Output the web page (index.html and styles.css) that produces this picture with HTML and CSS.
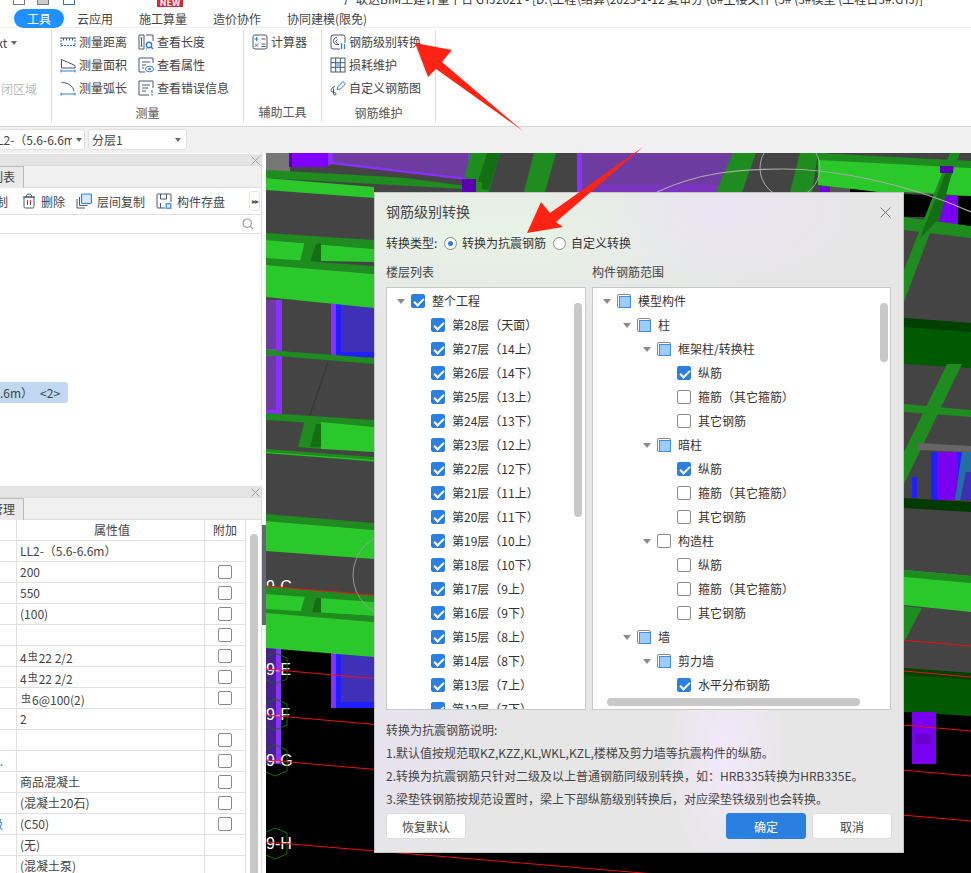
FILE: index.html
```html
<!DOCTYPE html>
<html>
<head>
    <title>钢筋级别转换</title>
    <meta charset="UTF-8">
    <link rel="stylesheet" href="styles.css">
</head>
<body>
<div id="app">
    <div class="title-bar">
        <span class="qa-icon qa-one"></span>
        <span class="qa-icon qa-two"></span>
        <span class="qa-icon qa-three"></span>
        <span class="new-badge">NEW</span>
        <span class="title-text">广联达BIM土建计量平台 GTJ2021 - [D:\工程\结算\2023-1-12 复审分 (8#主楼文件 (5# (3#模型 (工程日3#.GTJ)]</span>
    </div>
    <div class="tab-bar">
        <span class="tab tab-active">工具</span>
        <span class="tab tab-a">云应用</span>
        <span class="tab tab-b">施工算量</span>
        <span class="tab tab-c">造价协作</span>
        <span class="tab tab-d">协同建模(限免)</span>
    </div>

    <div class="ribbon">
        <div class="rib-group rib-first">
            <div class="rib-clip"><div class="rib-xt">xt <i class="caret-small"></i></div><div class="rib-dim">闭区域</div></div>
        </div>
        <div class="rib-group rib-measure">
            <div class="rib-body">
                <div class="rib-col rib-col-a">
                    <div class="rib-item">
                        <svg class="ico" viewBox="0 0 16 16"><path d="M1 4h14M3.500 4v2.500M6.500 4v2.500M9.500 4v2.500M12.500 4v2.500" stroke="#4a5670" fill="none"/><path d="M1 3v10M15 3v10M1 11.500h14" stroke="#2b7fe0" stroke-dasharray="2 1" fill="none"/></svg>
                        <span>测量距离</span>
                    </div>
                    <div class="rib-item">
                        <svg class="ico" viewBox="0 0 16 16"><path d="M1.500 2.500L15 8.500v2.500H1.500z" stroke="#4a5670" fill="none"/><path d="M1 14h14M1 12.500v3M15 12.500v3" stroke="#2b7fe0" fill="none"/></svg>
                        <span>测量面积</span>
                    </div>
                    <div class="rib-item">
                        <svg class="ico" viewBox="0 0 16 16"><path d="M1.500 2.500C8 2.500 13 6 14 11" stroke="#4a5670" fill="none"/><path d="M1 14h14M1 12.500v3M15 12.500v3" stroke="#2b7fe0" fill="none"/></svg>
                        <span>测量弧长</span>
                    </div>
                </div>
                <div class="rib-col">
                    <div class="rib-item">
                        <svg class="ico" viewBox="0 0 16 16"><path d="M8 1h7v6M8 15h1M1 1h5v14H1zM2.500 4h2M3.500 4v8M2.500 12h2" stroke="#4a5670" fill="none"/><circle cx="11" cy="11" r="2.700" stroke="#2b7fe0" stroke-width="1.400" fill="none"/><path d="M13 13l2 2" stroke="#2b7fe0" stroke-width="1.400"/></svg>
                        <span>查看长度</span>
                    </div>
                    <div class="rib-item">
                        <svg class="ico" viewBox="0 0 16 16"><path d="M15 6V1H1v14h6M4 5h8M4 8h4M4 11h2" stroke="#4a5670" fill="none"/><ellipse cx="11.500" cy="12" rx="4" ry="2.800" stroke="#2b7fe0" fill="none"/><circle cx="11.500" cy="12" r="1.300" fill="#2b7fe0"/></svg>
                        <span>查看属性</span>
                    </div>
                    <div class="rib-item">
                        <svg class="ico" viewBox="0 0 16 16"><path d="M15 8V1H1v14h10M4 5h8M4 8h6M4 11h4" stroke="#4a5670" fill="none"/><path d="M14 10v3M14 14v1.500" stroke="#4a5670" fill="none"/></svg>
                        <span>查看错误信息</span>
                    </div>
                </div>
            </div>
            <div class="rib-label">测量</div>
        </div>
        <div class="rib-group rib-aux">
            <div class="rib-body">
                <div class="rib-col">
                    <div class="rib-item">
                        <svg class="ico" viewBox="0 0 16 16"><rect x="1" y="1" width="14" height="14" rx="2" stroke="#4a5670" fill="none"/><path d="M4.500 3v4M2.500 5h4M2.800 9.500l3.400 3.400M6.200 9.500l-3.400 3.400" stroke="#2b7fe0" fill="none"/><path d="M9.500 5h4M9.500 10h4M9.500 12.500h4" stroke="#4a5670" fill="none"/></svg>
                        <span>计算器</span>
                    </div>
                </div>
            </div>
            <div class="rib-label">辅助工具</div>
        </div>
        <div class="rib-group rib-rebar">
            <div class="rib-body">
                <div class="rib-col">
                    <div class="rib-item">
                        <svg class="ico" viewBox="0 0 16 16"><path d="M10 15H3a2 2 0 0 1-2-2V3a2 2 0 0 1 2-2h10a2 2 0 0 1 2 2v6" stroke="#4a5670" fill="none"/><path d="M7 3.500C4 3.500 3.500 6 3.500 7.500S5 10.500 7 10.500h2M7.500 5.500l-2 2 2 2" stroke="#4a5670" fill="none"/><path d="M11.500 9v6M14.500 10v5" stroke="#2b7fe0" stroke-width="1.300" fill="none"/></svg>
                        <span>钢筋级别转换</span>
                    </div>
                    <div class="rib-item">
                        <svg class="ico" viewBox="0 0 16 16"><rect x="1" y="1" width="14" height="14" stroke="#4a5670" fill="none"/><path d="M5.700 1v14M10.300 1v14M1 5.700h14M1 10.300h14" stroke="#4a5670" fill="none"/><rect x="6" y="6" width="4" height="4" fill="#8fc0f5"/></svg>
                        <span>损耗维护</span>
                    </div>
                    <div class="rib-item">
                        <svg class="ico" viewBox="0 0 16 16"><path d="M7 9.500l1-3 5-5 2.500 2.500-5 5z" stroke="#2b7fe0" fill="none"/><path d="M5 6.500C2 7.500 1 9 1 10.500c0 2 4 1.500 5 3 .5 1-.5 1.500-2 1.500M3.500 8.500v6" stroke="#4a5670" fill="none"/></svg>
                        <span>自定义钢筋图</span>
                    </div>
                </div>
            </div>
            <div class="rib-label">钢筋维护</div>
        </div>
    </div>

    <div class="select-bar">
        <div class="select select-first"><span class="select-val">L2-（5.6-6.6m）</span><i class="caret-small"></i></div>
        <div class="select select-second"><span class="select-val">分层1</span><i class="caret-small"></i></div>
    </div>

    <div class="main">
        <div class="side">
            <div class="panel panel-list">
                <div class="panel-title"><svg class="panel-x" viewBox="0 0 9 9"><path d="M.5.500l8 8M8.500.500l-8 8" stroke="#a0a0a0" fill="none"/></svg></div>
                <div class="panel-tabs"><span class="panel-tab">列表</span></div>
                <div class="tools">
                    <span class="tool-cut">制</span>
                    <span class="tool tool-del">
                        <svg class="ico ico-tool" viewBox="0 0 14 16"><path d="M2 4h10v9.500a1.500 1.500 0 0 1-1.500 1.500h-7A1.500 1.500 0 0 1 2 13.500zM1 4h12M4.500 4V2.500C4.500 1.500 5.500 1 7 1s2.500.5 2.500 1.500V4" stroke="#4a5670" fill="none"/><path d="M5.500 7v5M8.500 7v5" stroke="#e02020" fill="none"/></svg>
                        <span>删除</span>
                    </span>
                    <span class="tool tool-copy">
                        <svg class="ico" viewBox="0 0 16 16"><path d="M1 6v9h8M3.500 4v8.500h8" stroke="#4a5670" fill="none"/><rect x="5.500" y="1" width="10" height="9.500" rx="1.500" fill="#d8e8fa" stroke="#2b7fe0" stroke-width="1.200"/></svg>
                        <span>层间复制</span>
                    </span>
                    <span class="tool tool-save">
                        <svg class="ico" viewBox="0 0 16 16"><path d="M9 15H2a1 1 0 0 1-1-1V2a1 1 0 0 1 1-1h12a1 1 0 0 1 1 1v7M4.500 1v5h6V1M4.500 15v-5" stroke="#4a5670" fill="none"/><rect x="9.500" y="10" width="6" height="6" fill="#5a9cf0"/><rect x="11" y="11.500" width="3" height="3" fill="#e4eefb"/></svg>
                        <span>构件存盘</span>
                    </span>
                    <span class="tool-more">▸▸</span>
                </div>
                <div class="search">
                    <svg class="search-ico" viewBox="0 0 12 12"><circle cx="5.200" cy="5.200" r="4.200" stroke="#9a9a9a" stroke-width="1.200" fill="none"/><path d="M8.300 8.300L11 11" stroke="#9a9a9a" stroke-width="1.200"/></svg>
                </div>
                <div class="list">
                    <div class="list-row"><span class="list-name">.6m）</span><span>&lt;2&gt;</span></div>
                </div>
            </div>
            <div class="panel panel-props">
                <div class="panel-title"><svg class="panel-x" viewBox="0 0 9 9"><path d="M.5.500l8 8M8.500.500l-8 8" stroke="#a0a0a0" fill="none"/></svg></div>
                <div class="panel-tabs"><span class="panel-tab">管理</span></div>
                <div class="props">
                    <div class="prop-row prop-head"><div class="prop-name"></div><div class="prop-val">属性值</div><div class="prop-add">附加</div></div>
                    <div class="prop-row"><div class="prop-name"></div><div class="prop-val">LL2-（5.6-6.6m）</div><div class="prop-add"></div></div>
                    <div class="prop-row"><div class="prop-name"></div><div class="prop-val">200</div><div class="prop-add"><i class="cb"></i></div></div>
                    <div class="prop-row"><div class="prop-name"></div><div class="prop-val">550</div><div class="prop-add"><i class="cb"></i></div></div>
                    <div class="prop-row"><div class="prop-name"></div><div class="prop-val">(100)</div><div class="prop-add"><i class="cb"></i></div></div>
                    <div class="prop-row"><div class="prop-name"></div><div class="prop-val"></div><div class="prop-add"><i class="cb"></i></div></div>
                    <div class="prop-row"><div class="prop-name"></div><div class="prop-val">4<span class="rb">虫</span>22 2/2</div><div class="prop-add"><i class="cb"></i></div></div>
                    <div class="prop-row"><div class="prop-name"></div><div class="prop-val">4<span class="rb">虫</span>22 2/2</div><div class="prop-add"><i class="cb"></i></div></div>
                    <div class="prop-row"><div class="prop-name"></div><div class="prop-val"><span class="rb">虫</span>6@100(2)</div><div class="prop-add"><i class="cb"></i></div></div>
                    <div class="prop-row"><div class="prop-name"></div><div class="prop-val">2</div><div class="prop-add"></div></div>
                    <div class="prop-row"><div class="prop-name"></div><div class="prop-val"></div><div class="prop-add"><i class="cb"></i></div></div>
                    <div class="prop-row"><div class="prop-name prop-link">...</div><div class="prop-val"></div><div class="prop-add"><i class="cb"></i></div></div>
                    <div class="prop-row"><div class="prop-name"></div><div class="prop-val">商品混凝土</div><div class="prop-add"><i class="cb"></i></div></div>
                    <div class="prop-row"><div class="prop-name"></div><div class="prop-val">(混凝土20石)</div><div class="prop-add"><i class="cb"></i></div></div>
                    <div class="prop-row"><div class="prop-name prop-link">级</div><div class="prop-val">(C50)</div><div class="prop-add"><i class="cb"></i></div></div>
                    <div class="prop-row"><div class="prop-name"></div><div class="prop-val">(无)</div><div class="prop-add"></div></div>
                    <div class="prop-row"><div class="prop-name"></div><div class="prop-val">(混凝土泵)</div><div class="prop-add"></div></div>
                </div>
                <div class="props-scroll"></div>
            </div>
            <div class="side-handle"></div>
        </div>

        <svg class="canvas" viewBox="266 153 705 720">
            <rect x="266" y="153" width="705" height="720" fill="#444"/>
            <!-- black floor -->
            <polygon points="266,640 971,700 971,873 266,873" fill="#000"/>

            <!-- purple slabs at the top -->
            <rect x="266" y="153" width="24" height="20" fill="#777"/>
            <rect x="289" y="153" width="3" height="14" fill="#5a00b0"/>
            <rect x="292" y="153" width="36" height="14" fill="#8000ff"/>
            <polygon points="328,153 472,153 472,182 328,165" fill="#8a30ff"/>
            <polygon points="333,153 468,153 468,178 333,162" fill="#6e3ca0"/>
            <rect x="577" y="153" width="160" height="39" fill="#6e3ca0"/>
            <rect x="577" y="153" width="5" height="39" fill="#8a30ff"/>
            <polygon points="600,185 737,185 737,192 600,192" fill="#7a34c0"/>
            <polygon points="820,186 860,192 820,192" fill="#7000e0"/>
            <rect x="830" y="186" width="40" height="6" fill="#555"/>
            <rect x="850" y="185" width="54" height="8" fill="#000"/>

            <!-- top braces -->
            <polygon points="470,153 500,153 489,192 462,192" fill="#1e8c1e"/>
            <polygon points="487,153 500,153 489,190 476,188" fill="#146e14"/>
            <polygon points="534,153 556,153 545,192 524,192" fill="#1e8c1e"/>
            <polygon points="733,153 756,153 742,192 716,192" fill="#1e8c1e"/>
            <polygon points="800,153 818,153 812,192 790,192" fill="#1e8c1e"/>

            <!-- band A -->
            <polygon points="266,170 482,182 482,190 266,178" fill="#1e8c1e"/>
            <polygon points="266,178 374,187 374,198 266,190" fill="#2ac82a"/>
            <polygon points="330,164 466,180 466,186 330,168" fill="#444"/>
            <rect x="462" y="179" width="14" height="13" fill="#5a00b0"/>

            <!-- top right band -->
            <polygon points="818,153 971,165 971,197 904,195 818,185" fill="#2ac82a"/>
            <polygon points="818,153 971,161 971,168 818,160" fill="#1e8c1e"/>
            <polygon points="904,192 971,196 971,300 904,300" fill="#444"/>
            <polygon points="904,194 943,196 943,217 904,217" fill="#000"/>
            <polygon points="958,196 971,196 971,231 958,231" fill="#000"/>
            <polygon points="943,196 958,196 958,231 938,231" fill="#7a00f0"/>
            <polygon points="904,217 971,226 971,238 904,230" fill="#1e8c1e"/>
            <polygon points="950,153 960,153 904,302 904,270" fill="#1e8c1e"/>
            <polygon points="952,172 946,172 920,238 940,218" fill="#146e14"/>
            <rect x="940" y="166" width="13" height="7" fill="#5a00b0"/>

            <!-- right side bands -->
            <polygon points="904,318 971,323 971,368 904,364" fill="#015a01"/>
            <polygon points="904,318 971,323 971,332 904,327" fill="#004000"/>
            <polygon points="947,364 962,364 904,484 904,452" fill="#1e8c1e"/>
            <polygon points="904,404 971,410 971,417 904,412" fill="#1e8c1e"/>
            <polygon points="931,452 971,452 971,500 931,500" fill="#2020ff"/>
            <rect x="937" y="452" width="21" height="48" fill="#7a00f0"/>
            <polygon points="955,500 962,452 971,452 971,500" fill="#2070a0"/>
            <polygon points="960,500 966,472 971,472 971,500" fill="#3a30b0"/>
            <polygon points="918,443 971,446 971,452 918,450" fill="#666"/>
            <rect x="912" y="477" width="5" height="21" fill="#2020ff"/>
            <polygon points="904,498 971,502 971,512 904,508" fill="#013a01"/>
            <polygon points="904,570 971,576 971,612 904,605" fill="#2ac82a"/>
            <polygon points="904,570 971,576 971,583 904,577" fill="#1e8c1e"/>
            <polygon points="904,606 922,608 904,642" fill="#1e8c1e"/>
            <polygon points="904,668 971,673 971,716 904,712" fill="#015a01"/>
            <polygon points="904,668 971,673 971,680 904,675" fill="#004000"/>
            <rect x="912" y="712" width="24" height="52" fill="#7a00f0"/>
            <rect x="915" y="734" width="16" height="10" fill="#6a00d0"/>

            <!-- left column purple -->
            <rect x="266" y="300" width="10" height="115" fill="#6e3ca0"/>
            <rect x="276" y="300" width="6" height="115" fill="#8a30ff"/>
            <rect x="266" y="349" width="10" height="7" fill="#5a6a90"/>
            <rect x="266" y="410" width="16" height="5" fill="#8a30ff"/>
            <rect x="266" y="648" width="10" height="116" fill="#4a2090"/>
            <rect x="276" y="648" width="5" height="116" fill="#8a30ff"/>

            <!-- blue blocks -->
            <rect x="331" y="304" width="43" height="53" fill="#8a30ff"/>
            <rect x="336" y="304" width="38" height="53" fill="#2020ff"/>
            <rect x="341" y="304" width="33" height="48" fill="#4030b8"/>
            <rect x="331" y="650" width="43" height="58" fill="#8a30ff"/>
            <rect x="336" y="650" width="38" height="58" fill="#2020ff"/>
            <rect x="341" y="650" width="33" height="52" fill="#4030b8"/>

            <!-- band B -->
            <polygon points="266,233 374,240 374,249 266,240" fill="#1e8c1e"/>
            <polygon points="266,240 374,249 374,262 266,260" fill="#2ac82a"/>
            <polygon points="305,241 321,243 315,262 300,262" fill="#1e8c1e"/>
            <polygon points="316,244 321,243 321,262 310,262" fill="#146e14"/>
            <polygon points="266,258 374,266 374,274 266,265" fill="#1e8c1e"/>
            <polygon points="266,265 374,274 374,308 266,297" fill="#2ac82a"/>

            <!-- band C -->
            <polygon points="266,350 374,358 374,364 266,355" fill="#1e8c1e"/>
            <path d="M328 362L310 415" stroke="#333" fill="none"/>

            <!-- band D -->
            <polygon points="266,413 374,420 374,427 266,420" fill="#1e8c1e"/>
            <polygon points="321,422 374,427 374,452 321,449" fill="#2ac82a"/>
            <polygon points="305,420 321,422 321,449 298,447" fill="#1e8c1e"/>
            <polygon points="316,424 321,424 321,447 310,447" fill="#146e14"/>
            <polygon points="266,449 374,457 374,462 266,453" fill="#1e8c1e"/>
            <polygon points="266,452 374,460 374,461 266,453" fill="#2ac82a"/>

            <!-- band E -->
            <polygon points="266,514 374,523 374,530 266,521" fill="#1e8c1e"/>
            <polygon points="266,521 374,530 374,559 266,551" fill="#2ac82a"/>

            <!-- axis labels -->
            <text class="axis" x="266" y="592">9-C</text>
            <text class="axis" x="266" y="675">9-E</text>
            <text class="axis" x="266" y="720">9-F</text>
            <text class="axis" x="266" y="766">9-G</text>
            <text class="axis" x="266" y="849">9-H</text>
            <path d="M264 658l11-5 12 5v21l-12 5-11-5zM264 704l11-5 12 5v21l-12 5-11-5zM264 750l11-5 12 5v21l-12 5-11-5zM264 833l11-5 12 5v21l-12 5-11-5z" stroke="#0d6d0d" fill="none"/>

            <!-- band F -->
            <polygon points="266,593 374,600 374,616 266,610" fill="#2ac82a"/>
            <polygon points="266,586 374,595 374,602 266,594" fill="#1e8c1e"/>
            <polygon points="305,596 321,598 315,616 300,614" fill="#1e8c1e"/>
            <polygon points="316,598 321,598 321,616 311,616" fill="#146e14"/>
            <polygon points="266,609 374,616 374,622 266,614" fill="#1e8c1e"/>
            <polygon points="266,613 374,622 374,657 266,648" fill="#2ac82a"/>

            <!-- guide circles -->
            <circle cx="395" cy="575" r="42" stroke="#999" fill="none"/>
            <circle cx="790" cy="168" r="30" stroke="#aaa" fill="none"/>
            <path d="M657 192C700 172 740 169 783 169S900 180 971 212" stroke="#aaa" stroke-width="1.200" fill="none"/>

            <!-- red grid lines -->
            <g stroke="#f01010" fill="none">
                <path d="M266 586L971 646"/>
                <path d="M266 669L971 731"/>
                <path d="M266 715L971 776"/>
                <path d="M266 760L971 821"/>
                <path d="M266 842L971 900"/>
                <path d="M904 671L971 677"/>
            </g>
        </svg>
    </div>

    <div class="dialog">
        <div class="dlg-head">
            <span class="dlg-title">钢筋级别转换</span>
            <svg class="dlg-close" viewBox="0 0 11 11"><path d="M.5.500l10 10M10.500.500l-10 10" stroke="#777" fill="none"/></svg>
        </div>
        <div class="dlg-type">
            <span class="type-label">转换类型:</span>
            <i class="radio radio-on"></i><span class="type-opt">转换为抗震钢筋</span>
            <i class="radio"></i><span>自定义转换</span>
        </div>
        <div class="dlg-cols">
            <div class="col-floors">
                <div class="col-label">楼层列表</div>
                <div class="tree">
                    <div class="row lv-root"><i class="arrow"></i><i class="cb on"></i><span>整个工程</span></div>
                    <div class="row lv-leaf"><i class="cb on"></i><span>第28层（天面）</span></div>
                    <div class="row lv-leaf"><i class="cb on"></i><span>第27层（14上）</span></div>
                    <div class="row lv-leaf"><i class="cb on"></i><span>第26层（14下）</span></div>
                    <div class="row lv-leaf"><i class="cb on"></i><span>第25层（13上）</span></div>
                    <div class="row lv-leaf"><i class="cb on"></i><span>第24层（13下）</span></div>
                    <div class="row lv-leaf"><i class="cb on"></i><span>第23层（12上）</span></div>
                    <div class="row lv-leaf"><i class="cb on"></i><span>第22层（12下）</span></div>
                    <div class="row lv-leaf"><i class="cb on"></i><span>第21层（11上）</span></div>
                    <div class="row lv-leaf"><i class="cb on"></i><span>第20层（11下）</span></div>
                    <div class="row lv-leaf"><i class="cb on"></i><span>第19层（10上）</span></div>
                    <div class="row lv-leaf"><i class="cb on"></i><span>第18层（10下）</span></div>
                    <div class="row lv-leaf"><i class="cb on"></i><span>第17层（9上）</span></div>
                    <div class="row lv-leaf"><i class="cb on"></i><span>第16层（9下）</span></div>
                    <div class="row lv-leaf"><i class="cb on"></i><span>第15层（8上）</span></div>
                    <div class="row lv-leaf"><i class="cb on"></i><span>第14层（8下）</span></div>
                    <div class="row lv-leaf"><i class="cb on"></i><span>第13层（7上）</span></div>
                    <div class="row lv-leaf"><i class="cb on"></i><span>第12层（7下）</span></div>
                    <div class="vscroll vscroll-floors"></div>
                </div>
            </div>
            <div class="col-parts">
                <div class="col-label">构件钢筋范围</div>
                <div class="tree">
                    <div class="row lv-0"><i class="arrow"></i><i class="cb part"></i><span>模型构件</span></div>
                    <div class="row lv-1"><i class="arrow"></i><i class="cb part"></i><span>柱</span></div>
                    <div class="row lv-2"><i class="arrow"></i><i class="cb part"></i><span>框架柱/转换柱</span></div>
                    <div class="row lv-3"><i class="cb on"></i><span>纵筋</span></div>
                    <div class="row lv-3"><i class="cb"></i><span>箍筋（其它箍筋）</span></div>
                    <div class="row lv-3"><i class="cb"></i><span>其它钢筋</span></div>
                    <div class="row lv-2"><i class="arrow"></i><i class="cb part"></i><span>暗柱</span></div>
                    <div class="row lv-3"><i class="cb on"></i><span>纵筋</span></div>
                    <div class="row lv-3"><i class="cb"></i><span>箍筋（其它箍筋）</span></div>
                    <div class="row lv-3"><i class="cb"></i><span>其它钢筋</span></div>
                    <div class="row lv-2"><i class="arrow"></i><i class="cb"></i><span>构造柱</span></div>
                    <div class="row lv-3"><i class="cb"></i><span>纵筋</span></div>
                    <div class="row lv-3"><i class="cb"></i><span>箍筋（其它箍筋）</span></div>
                    <div class="row lv-3"><i class="cb"></i><span>其它钢筋</span></div>
                    <div class="row lv-1"><i class="arrow"></i><i class="cb part"></i><span>墙</span></div>
                    <div class="row lv-2"><i class="arrow"></i><i class="cb part"></i><span>剪力墙</span></div>
                    <div class="row lv-3"><i class="cb on"></i><span>水平分布钢筋</span></div>
                    <div class="vscroll vscroll-parts"></div>
                    <div class="hscroll"></div>
                </div>
            </div>
        </div>
        <div class="dlg-notes">
            <p>转换为抗震钢筋说明:</p>
            <p>1.默认值按规范取KZ,KZZ,KL,WKL,KZL,楼梯及剪力墙等抗震构件的纵筋。</p>
            <p>2.转换为抗震钢筋只针对二级及以上普通钢筋同级别转换，如：HRB335转换为HRB335E。</p>
            <p>3.梁垫铁钢筋按规范设置时，梁上下部纵筋级别转换后，对应梁垫铁级别也会转换。</p>
        </div>
        <div class="dlg-foot">
            <button class="btn">恢复默认</button>
            <span class="foot-space"></span>
            <button class="btn btn-primary">确定</button>
            <button class="btn">取消</button>
        </div>
    </div>

    <!-- red annotation arrows drawn over the screenshot -->
    <svg class="arrows" viewBox="0 0 971 873">
        <polygon points="415,43 452,50 442,62 523,131 436,69 428,77" fill="#ff2314"/>
        <polygon points="527,233 541,202 550,213 643,147 556,222 563,227" fill="#ff2314"/>
    </svg>
</div>
</body>
</html>
```

FILE: styles.css
```css
* {
    margin: 0;
    padding: 0;
    box-sizing: border-box;
}

body {
    font-family: "Noto Sans CJK SC", "Noto Sans", sans-serif;
    font-size: 12px;
    color: #444;
    background: white;
    overflow: hidden;
}

i {
    display: block;
    font-style: normal;
}

#app {
    position: relative;
    width: 971px;
    height: 873px;
    overflow: hidden;
    display: flex;
    flex-direction: column;
}

/* Title bar, mostly cut off by the crop */
.title-bar {
    height: 9px;
    overflow: hidden;
    display: flex;
    align-items: flex-start;
    flex-shrink: 0;
}

.qa-icon {
    width: 12px;
    height: 5px;
    border: 1px solid #777;
    border-top: none;
}

.qa-one { margin-left: 13px; }
.qa-two { margin-left: 12px; background: #ccc; }
.qa-three { margin-left: 14px; border-color: #3a6ea8; }

.new-badge {
    margin-left: 82px;
    width: 26px;
    height: 7px;
    background: #d8262c;
    color: white;
    font-size: 9px;
    font-weight: 700;
    line-height: 5px;
    text-align: center;
}

.title-text {
    margin-left: 161px;
    margin-top: -9px;
    line-height: 16px;
    font-size: 12px;
    white-space: nowrap;
    color: #333;
}

.tab-bar {
    height: 19px;
    display: flex;
    align-items: center;
    flex-shrink: 0;
    margin-bottom: 1px;
    position: relative;
    color: #444;
}

.tab-bar::after {
    content: "";
    position: absolute;
    left: 0;
    right: 0;
    top: 18px;
    height: 1px;
    background: #eee;
    z-index: 0;
}

.tab {
    white-space: nowrap;
    position: relative;
    z-index: 1;
}

.tab-active {
    margin-left: 14px;
    width: 50px;
    height: 19px;
    line-height: 19px;
    text-align: center;
    background: #1e90ff;
    color: white;
    border-radius: 10px;
}

.tab-a { margin-left: 13px; }
.tab-b { margin-left: 26px; }
.tab-c { margin-left: 26px; }
.tab-d { margin-left: 26px; }

/* Ribbon */
.ribbon {
    height: 98px;
    border-bottom: 1px solid #d8d8d8;
    padding-top: 1px;
    display: flex;
    flex-shrink: 0;
    background: white;
}

.rib-group {
    height: 92px;
    border-right: 1px solid #ddd;
    display: flex;
    flex-direction: column;
    flex-shrink: 0;
}

.rib-first { width: 52px; }
.rib-measure { width: 192px; }
.rib-aux { width: 78px; }
.rib-rebar { width: 114px; }

.rib-clip {
    padding-top: 1px;
}

.rib-xt {
    height: 23px;
    line-height: 23px;
    margin-left: -3px;
    display: flex;
    align-items: center;
    gap: 4px;
    white-space: nowrap;
}

.rib-dim {
    margin-top: 23px;
    margin-left: 1px;
    height: 23px;
    line-height: 23px;
    color: #bdbdbd;
}

.rib-body {
    flex: 1;
    display: flex;
    padding: 0 0 0 8px;
}

.rib-col-a {
    width: 78px;
}

.rib-item {
    height: 23px;
    display: flex;
    align-items: center;
    gap: 3px;
    white-space: nowrap;
}

.ico {
    width: 16px;
    height: 16px;
    flex-shrink: 0;
}

.rib-label {
    height: 24px;
    line-height: 28px;
    text-align: center;
    color: #555;
}

.caret-small {
    width: 0;
    height: 0;
    border-left: 3px solid transparent;
    border-right: 3px solid transparent;
    border-top: 4px solid #666;
}

/* Floor / layer selects */
.select-bar {
    height: 26px;
    background: #f0f0f0;
    display: flex;
    gap: 3px;
    padding-top: 2px;
    flex-shrink: 0;
}

.select {
    height: 21px;
    background: white;
    border: 1px solid #e0e0e0;
    border-radius: 3px;
    display: flex;
    align-items: center;
    overflow: hidden;
    position: relative;
}

.select-first {
    width: 85px;
    border-left: none;
}

.select-first .select-val {
    margin-left: -3px;
    width: 75px;
    overflow: hidden;
    white-space: nowrap;
}

.select-first .caret-small {
    margin-left: 4px;
}

.select-second {
    width: 99px;
    padding-left: 3px;
}

.select-second .select-val {
    flex: 1;
}

.select-second .caret-small {
    margin-right: 5px;
}

/* Main area */
.main {
    flex: 1;
    display: flex;
    min-height: 0;
}

.side {
    width: 266px;
    position: relative;
    flex-shrink: 0;
    display: flex;
    flex-direction: column;
    gap: 5px;
    padding-right: 4px;
}

.side-handle {
    position: absolute;
    left: 262px;
    top: 372px;
    width: 4px;
    height: 100px;
    background: #667;
}

.panel {
    border-right: 1px solid #ddd;
    position: relative;
    overflow: hidden;
    display: flex;
    flex-direction: column;
}

.panel-list {
    height: 327px;
}

.panel-props {
    flex: 1;
    min-height: 0;
}

.panel-title {
    height: 11px;
    margin-top: 1px;
    background: #e4e4e4;
    position: relative;
    flex-shrink: 0;
}

.panel-x {
    position: absolute;
    left: 251px;
    top: 2px;
    width: 9px;
    height: 9px;
}

.panel-tabs {
    height: 23px;
    background: #f0f0f0;
    border-top: 1px solid #ddd;
    border-bottom: 1px solid #ddd;
    flex-shrink: 0;
}

.panel-tab {
    display: block;
    width: 24px;
    height: 22px;
    background: #eaeaea;
    border-right: 1px solid #bbb;
    border-top: 1px solid #bbb;
    line-height: 20px;
    white-space: nowrap;
    direction: rtl;
    padding-right: 8px;
    font-size: 12px;
    overflow: hidden;
}

.tools {
    height: 27px;
    border-bottom: 1px solid #e0e0e0;
    display: flex;
    align-items: center;
    position: relative;
    flex-shrink: 0;
}

.tool-cut {
    width: 8px;
    overflow: hidden;
    direction: rtl;
    white-space: nowrap;
}

.tool {
    display: flex;
    align-items: center;
    gap: 5px;
    white-space: nowrap;
}

.ico-tool {
    width: 14px;
}

.tool-del { margin-left: 14px; }
.tool-copy { margin-left: 11px; }
.tool-save { margin-left: 11px; }

.tool-more {
    position: absolute;
    left: 249px;
    top: 3px;
    width: 11px;
    height: 20px;
    border: 1px solid #e4e4e4;
    border-radius: 3px;
    font-size: 8px;
    line-height: 18px;
    text-align: center;
    color: #555;
    letter-spacing: -1px;
}

.search {
    height: 19px;
    border-bottom: 1px solid #e0e0e0;
    display: flex;
    justify-content: flex-end;
    align-items: center;
    padding-right: 7px;
    flex-shrink: 0;
}

.search-ico {
    width: 12px;
    height: 12px;
}

.list {
    flex: 1;
    padding-top: 148px;
}

.list-row {
    width: 68px;
    height: 21px;
    line-height: 21px;
    background: #c0d8f0;
    border-radius: 0 3px 3px 0;
    display: flex;
    gap: 7px;
    white-space: nowrap;
}

/* Property table */
.prop-row {
    display: grid;
    grid-template-columns: 17px 188px 41px;
    height: 21px;
    width: 246px;
    border-bottom: 1px solid #e0e0e0;
}

.prop-row > div {
    border-right: 1px solid #e0e0e0;
    line-height: 20px;
    white-space: nowrap;
    overflow: hidden;
}

.prop-head .prop-val,
.prop-head .prop-add {
    text-align: center;
}

.prop-val {
    padding-left: 3px;
}

.prop-add {
    display: flex;
    align-items: center;
    justify-content: center;
}

.prop-link {
    color: #2b7fe0;
    display: flex;
    justify-content: flex-end;
    padding-right: 13px;
}

.rb {
    font-size: 10px;
    vertical-align: 3px;
    margin: 0 1px;
}

.props-scroll {
    position: absolute;
    left: 250px;
    top: 49px;
    width: 8px;
    height: 360px;
    background: #c8c8c8;
    border-radius: 4px;
}

/* Viewport */
.canvas {
    width: 705px;
    height: 720px;
    flex-shrink: 0;
    display: block;
}

.axis {
    fill: white;
    font-family: "Liberation Sans", sans-serif;
    font-size: 16px;
}

/* Dialog */
.dialog {
    position: absolute;
    left: 374px;
    top: 192px;
    width: 530px;
    height: 661px;
    border: 1px solid #c4c4c4;
    padding: 0 11px;
    background:
        radial-gradient(ellipse 130px 70px at 350px 20px, #ebe4f4 0%, rgba(235, 228, 244, 0) 100%),
        radial-gradient(ellipse 60px 130px at 352px 560px, #f2e8fb 0%, rgba(242, 232, 251, 0) 100%),
        radial-gradient(ellipse 110px 110px at 20px 560px, #e6e2f0 0%, rgba(230, 226, 240, 0) 100%),
        radial-gradient(ellipse 300px 90px at 120px 40px, #e8f3e6 0%, rgba(232, 243, 230, 0) 100%),
        #e6e6e6;
    display: flex;
    flex-direction: column;
}

.dlg-head {
    height: 39px;
    display: flex;
    align-items: center;
    justify-content: space-between;
    flex-shrink: 0;
}

.dlg-title {
    font-size: 14px;
    color: #444;
    margin-bottom: 4px;
}

.dlg-close {
    width: 11px;
    height: 11px;
    margin-right: 1px;
}

.dlg-type {
    height: 22px;
    display: flex;
    align-items: center;
    color: #333;
    flex-shrink: 0;
}

.dlg-type span {
    margin-bottom: 2px;
}

.type-label {
    width: 58px;
}

.radio {
    width: 13px;
    height: 13px;
    border: 1px solid #8a8a8a;
    border-radius: 50%;
    background: white;
    position: relative;
    margin-right: 5px;
    flex-shrink: 0;
}

.radio-on::after {
    content: "";
    position: absolute;
    left: 3px;
    top: 3px;
    width: 5px;
    height: 5px;
    border-radius: 50%;
    background: #2b7fe0;
}

.type-opt {
    margin-right: 7px;
}

.dlg-cols {
    display: flex;
    gap: 6px;
    margin-top: 8px;
    flex-shrink: 0;
}

.col-floors { width: 200px; }
.col-parts { width: 299px; }

.col-label {
    height: 25px;
    line-height: 20px;
    color: #444;
}

.tree {
    height: 423px;
    background: white;
    border: 1px solid #c8c8c8;
    padding-top: 1px;
    overflow: hidden;
    position: relative;
}

.row {
    height: 24px;
    display: flex;
    align-items: center;
    white-space: nowrap;
    color: #333;
}

.row span {
    margin-bottom: 2px;
}

.row .cb {
    margin-right: 7px;
}

.arrow {
    width: 0;
    height: 0;
    border-left: 4px solid transparent;
    border-right: 4px solid transparent;
    border-top: 5px solid #8c8c8c;
    margin-right: 6px;
}

.lv-root { padding-left: 10px; }
.lv-leaf { padding-left: 44px; }
.lv-0 { padding-left: 10px; }
.lv-1 { padding-left: 30px; }
.lv-2 { padding-left: 50px; }
.lv-3 { padding-left: 84px; }

.cb {
    width: 14px;
    height: 14px;
    border: 1px solid #8a8a8a;
    border-radius: 2px;
    background: white;
    position: relative;
    flex-shrink: 0;
}

.cb.on {
    background: #2b7fe0;
    border-color: #2b7fe0;
}

.cb.on::after {
    content: "";
    position: absolute;
    left: 4px;
    top: 1px;
    width: 4px;
    height: 8px;
    border-right: 2px solid white;
    border-bottom: 2px solid white;
    transform: rotate(45deg);
}

.cb.part::after {
    content: "";
    position: absolute;
    left: 1px;
    top: 1px;
    width: 10px;
    height: 10px;
    background: #9ccbff;
    border: 1px solid #3d8df0;
}

.vscroll {
    position: absolute;
    width: 8px;
    background: #c8c8c8;
    border-radius: 4px;
}

.vscroll-floors {
    left: 187px;
    top: 15px;
    height: 214px;
}

.vscroll-parts {
    left: 287px;
    top: 15px;
    height: 59px;
}

.hscroll {
    position: absolute;
    left: 14px;
    top: 410px;
    width: 253px;
    height: 8px;
    background: #c8c8c8;
    border-radius: 4px;
}

.dlg-notes {
    margin-top: 8px;
    color: #444;
    flex-shrink: 0;
}

.dlg-notes p {
    height: 23px;
    line-height: 23px;
    white-space: nowrap;
}

.dlg-foot {
    margin-top: 3px;
    display: flex;
    gap: 6px;
}

.foot-space {
    flex: 1;
}

.btn {
    width: 80px;
    height: 26px;
    background: white;
    border: 1px solid #dcdcdc;
    border-radius: 3px;
    font-family: inherit;
    font-size: 12px;
    color: #444;
}

.btn-primary {
    background: #2b7fe0;
    border-color: #2b7fe0;
    color: white;
}

.arrows {
    position: absolute;
    left: 0;
    top: 0;
    width: 971px;
    height: 873px;
    pointer-events: none;
}
```
